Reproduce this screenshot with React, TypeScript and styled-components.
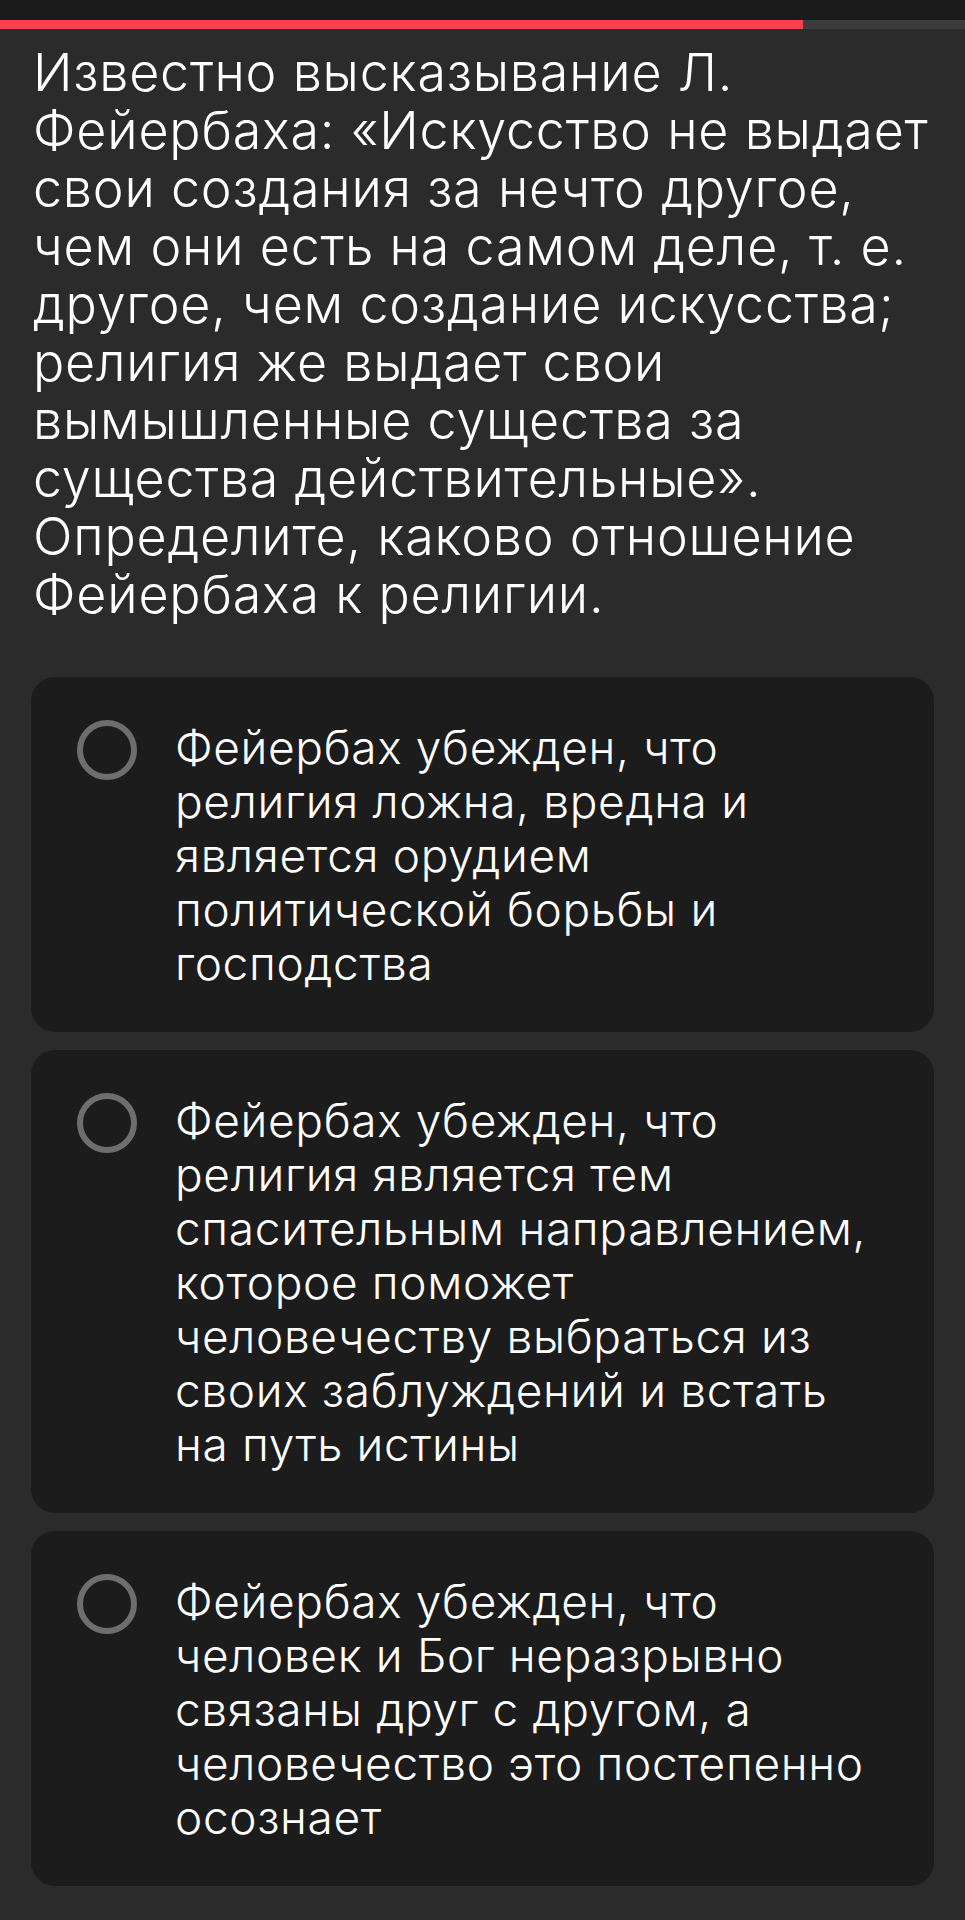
import styled, { createGlobalStyle } from "styled-components";

const GlobalStyle = createGlobalStyle`
  html, body {
    margin: 0;
    padding: 0;
    background: #2b2b2b;
  }
  * { box-sizing: border-box; }
`;

const question = [
  "Известно высказывание Л.",
  "Фейербаха: «Искусство не выдает",
  "свои создания за нечто другое,",
  "чем они есть на самом деле, т. е.",
  "другое, чем создание искусства;",
  "религия же выдает свои",
  "вымышленные существа за",
  "существа действительные».",
  "Определите, каково отношение",
  "Фейербаха к религии.",
];

const options = [
  [
    "Фейербах убежден, что",
    "религия ложна, вредна и",
    "является орудием",
    "политической борьбы и",
    "господства",
  ],
  [
    "Фейербах убежден, что",
    "религия является тем",
    "спасительным направлением,",
    "которое поможет",
    "человечеству выбраться из",
    "своих заблуждений и встать",
    "на путь истины",
  ],
  [
    "Фейербах убежден, что",
    "человек и Бог неразрывно",
    "связаны друг с другом, а",
    "человечество это постепенно",
    "осознает",
  ],
];

export default function App() {
  const progress = 83.2;

  return (
    <Page>
      <GlobalStyle />
      <StatusStrip />
      <ProgressTrack>
        <ProgressFill style={{ width: `${progress}%` }} />
      </ProgressTrack>
      <Content>
        <Question>
          {question.map((line) => (
            <Line key={line}>{line}</Line>
          ))}
        </Question>
        <Options>
          {options.map((lines, i) => (
            <OptionCard key={i}>
              <Radio />
              <OptionText>
                {lines.map((line) => (
                  <Line key={line}>{line}</Line>
                ))}
              </OptionText>
            </OptionCard>
          ))}
        </Options>
      </Content>
    </Page>
  );
}

const Page = styled.div`
  width: 965px;
  min-height: 1920px;
  background-color: #2b2b2b;
  font-family: Inter, "Open Sans", sans-serif;
  color: #ffffff;
`;
const StatusStrip = styled.div`
  height: 20px;
  background-color: #1b1b1b;
`;
const ProgressTrack = styled.div`
  height: 9px;
  background-color: #3c3c3c;
`;
const ProgressFill = styled.div`
  height: 100%;
  background-color: #fb4149;
`;
const Content = styled.div`
  padding: 15px 31px 0 31px;
`;
const Question = styled.div`
  font-size: 52px;
  line-height: 58px;
  font-weight: 300;
  letter-spacing: 0.8px;
  padding-left: 2px;
`;
const Line = styled.span`
  display: block;
  white-space: nowrap;
`;
const Options = styled.div`
  margin-top: 53px;
  display: flex;
  flex-direction: column;
  gap: 18px;
`;
const OptionCard = styled.div`
  display: flex;
  align-items: flex-start;
  gap: 38px;
  padding: 43px 46px 42px 46px;
  background-color: #1c1c1c;
  border-radius: 24px;
`;
const Radio = styled.div`
  flex: 0 0 60px;
  width: 60px;
  height: 60px;
  border: 6px solid #6e6e6e;
  border-radius: 50%;
`;
const OptionText = styled.div`
  font-size: 46px;
  line-height: 54px;
  font-weight: 300;
  letter-spacing: 0.65px;
`;
